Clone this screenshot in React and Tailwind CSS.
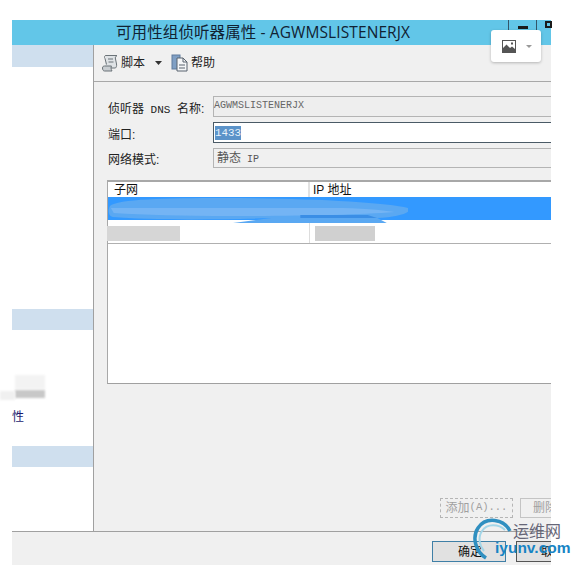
const cjk = "font-['Liberation_Sans','Noto_Sans_CJK_SC',sans-serif]";
const mono = "font-['Liberation_Mono','Noto_Sans_CJK_SC',monospace]";

function ScriptIcon() {
  return (
    <svg width="18" height="19" viewBox="0 0 18 19" fill="none">
      <path d="M5 1.500h11c-1.500 1-2 2-1.500 3.500l1 5c.4 2-.2 3-1 4H4" fill="#dfe3e6" stroke="#6b7378" strokeWidth="1" />
      <path d="M1.500 14c0-1.500 1-2 2-2h7c-.7 1-.7 3 .5 5H3.500c-1.200 0-2-1.200-2-3z" fill="#c9ced2" stroke="#6b7378" strokeWidth="1" />
      <path d="M5 1.500c-1.500 0-2 1.500-1 3l1.500 6M7 5h5M7.500 8h5" stroke="#6b7378" strokeWidth="1" />
    </svg>
  );
}

function HelpIcon() {
  return (
    <svg width="17" height="18" viewBox="0 0 17 18" fill="none">
      <rect x="1" y="1" width="8" height="14" fill="#7f9fc4" stroke="#5f7a9c" />
      <path d="M6 4h6l4 4v9H6z" fill="#f4f6f8" stroke="#59636e" />
      <path d="M12 4v4h4M8 11h6M8 14h6" stroke="#59636e" />
    </svg>
  );
}

function Field({ label, children }) {
  return (
    <div className="flex items-center">
      <span className="w-[105px] h-[20px] shrink-0 pt-[4px] text-[12px] leading-[16px] text-[#222]">{label}</span>
      {children}
    </div>
  );
}

export default function App() {
  return (
    <div className={`relative w-[576px] h-[565px] overflow-hidden bg-white pt-5 pl-3 pr-[25px] ${cjk}`}>
      <div className="flex flex-col h-[545px]">
        {/* title bar */}
        <div className="relative h-[25px] shrink-0 bg-[#62c6e8] flex items-center pl-[104px] text-[15.500px] text-[#123] tracking-[0.1px] font-['Open_Sans','Noto_Sans_CJK_SC',sans-serif]">
          可用性组侦听器属性 - AGWMSLISTENERJX
          <div className="absolute right-0 top-0 h-full flex">
            <div className="w-[28px] border-l border-[#33566a] flex justify-center pt-[6px]">
              <div className="w-[10px] h-[3px] bg-[#1a1a1a]" />
            </div>
            <div className="w-[15px] border-l border-[#33566a] pl-2 pt-[1px]">
              <div className="w-[7px] h-[7px] border-2 border-[#1a1a1a]" />
            </div>
          </div>
        </div>

        <div className="flex flex-1 min-h-0">
          {/* left pages list */}
          <div className="w-[81px] shrink-0 flex flex-col bg-white">
            <div className="h-[22px] bg-[#cfdfee]" />
            <div className="h-[242px]" />
            <div className="h-[21px] bg-[#cfdfee]" />
            <div className="h-[95px] flex items-end text-[12px] leading-[16px] text-[#1a1a6e]">性</div>
            <div className="mt-[21px] h-[21px] bg-[#cfdfee]" />
          </div>

          {/* main panel */}
          <div className="flex-1 min-w-0 flex flex-col bg-[#f0f0f0] border-l border-[#a0a0a0]">
            <div className="h-[37px] shrink-0 border-b border-[#a8a8a8] flex items-center pl-[7px] text-[12px] text-[#222]">
              <ScriptIcon />
              <span className="ml-[2px]">脚本</span>
              <svg className="ml-[10px]" width="7" height="4" viewBox="0 0 7 4"><path d="M0 0h7L3.500 4z" fill="#333" /></svg>
              <span className="ml-[9px] flex"><HelpIcon /></span>
              <span className="ml-[3px]">帮助</span>
            </div>

            <div className="flex flex-col pt-[14px] pl-[14px] gap-[5px]">
              <Field label={<>侦听器<span className={`text-[11px] ${mono}`}> DNS </span>名称:</>}>
                <div className={`flex-1 h-[21px] border border-[#b4b4b4] border-r-0 bg-[#eeeeee] text-[10px] leading-[18px] text-[#666] ${mono}`}>
                  AGWMSLISTENERJX
                </div>
              </Field>
              <Field label="端口:">
                <div className="flex-1 h-[21px] border border-[#4a5a66] border-r-0 bg-white pl-[1px] flex items-center text-[10.800px]">
                  <span className={`bg-[#5b93c9] text-[#e8f2fa] leading-[14px] ${mono}`}>1433</span>
                </div>
              </Field>
              <Field label="网络模式:">
                <div className="flex-1 h-[20px] border border-[#b4b4b4] border-r-0 bg-[#f0f0f0] pl-[3px] text-[12px] leading-[18px] text-[#555]">
                  静态<span className={`text-[10px] ${mono}`}> IP</span>
                </div>
              </Field>
            </div>

            {/* subnet table */}
            <div className="ml-[13px] mt-[12px] h-[204px] shrink-0 border border-t-2 border-r-0 border-[#a8a8a8] border-b-[#a0a0a0] bg-white flex flex-col">
              <div className="h-[15px] shrink-0 flex text-[12px] leading-[16px] text-[#111]">
                <div className="w-[202px] pl-[6px] border-r-2 border-[#e2e2e2]">子网</div>
                <div className="pl-[3px]">IP 地址</div>
              </div>
              <div className="h-[23px] shrink-0 bg-[#3399ff]" />
              <div className="h-[24px] shrink-0 flex border-b border-[#b0b0b0]">
                <div className="w-[202px] border-r border-[#ddd]" />
              </div>
            </div>

            <div className="flex-1" />
            <div className="h-[33px] shrink-0 flex justify-end gap-[7px] pb-[13px] text-[12px] text-[#a0a0a0]">
              <div className="w-[73px] border border-dashed border-[#b5b5b5] flex items-center justify-center">
                添加<span className={`text-[10.500px] ${mono}`}>(A)...</span>
              </div>
              <div className="w-[31px] border border-[#c4c4c4] border-r-0 overflow-hidden pl-[12px] leading-[18px] whitespace-nowrap">删除</div>
            </div>
          </div>
        </div>

        {/* footer */}
        <div className="h-[34px] shrink-0 bg-[#f0f0f0] border-t border-[#a0a0a0] flex justify-end gap-[10px] pt-[9px] text-[12px] text-[#111]">
          <div className="w-[74px] h-[21px] border border-[#3f7fa6] bg-[#e1e1e1] pl-[25px] leading-[20px]">确定</div>
          <div className="w-[35px] h-[21px] border border-[#555] border-r-0 bg-[#e1e1e1] pl-[24px] overflow-hidden whitespace-nowrap leading-[20px]">取消</div>
        </div>
      </div>

      {/* image toolbar floating over the title bar */}
      <div className="absolute left-[491px] top-[30px] w-[50px] h-[32px] bg-white rounded-[3px] shadow-[0_1px_3px_rgba(0,0,0,0.25)] flex items-center pl-[11px] gap-[10px]">
        <svg width="14" height="13" viewBox="0 0 14 13">
          <rect x="0.500" y="0.500" width="13" height="12" fill="#fff" stroke="#555" />
          <path d="M1 12V8l3.500-3.500L8 8l2-1.500L13 9v3z" fill="#555" />
          <rect x="9" y="2.500" width="2" height="2" fill="#555" />
        </svg>
        <svg width="6" height="3" viewBox="0 0 6 3"><path d="M0 0h6L3 3z" fill="#999" /></svg>
      </div>

      {/* redaction smears */}
      <svg className="absolute left-[108px] top-[196px]" width="300" height="30" viewBox="0 0 312 30" preserveAspectRatio="none">
        <path d="M2 10C10 3 60 2 120 2c80 0 170 4 192 10 6 4-10 9-32 10l10 5H130l40-5c-60 2-130 2-165-1C0 20 0 14 2 10z" fill="#5aa8f2" />
        <path d="M3 12h230c30 0 50 2 65 4-40 3-100 4-170 4-50 0-90-1-122-3z" fill="#74b4f4" />
        <path d="M200 19h70l10 3h-80z" fill="#3a8ee6" />
      </svg>
      <div className="absolute left-[107px] top-[226px] w-[73px] h-[15px] bg-[#d6d6d6] blur-[0.500px]" />
      <div className="absolute left-[315px] top-[226px] w-[60px] h-[15px] bg-[#d0d0d0] blur-[0.500px]" />
      <div className="absolute left-[15px] top-[375px] w-[30px] h-[14px] bg-[#f3f3f3] blur-[1px]" />
      <div className="absolute left-[15px] top-[390px] w-[30px] h-[8px] bg-[#c8c8c8] blur-[1px]" />
      <div className="absolute left-0 top-[391px] w-[15px] h-[9px] bg-[#f0f0f0] blur-[1px]" />

      {/* site watermark */}
      <svg className="absolute left-[470px] top-[516px]" width="44" height="46" viewBox="0 0 44 46" fill="none">
        <path d="M40 15C34 3 16 0 8 12c-6 9-3 23 8 30" stroke="#2f8fc0" strokeWidth="3.500" />
        <path d="M35 14C29 8 17 7 12 15c-4 6-3 14 2 20" stroke="#a3d6e8" strokeWidth="2" />
      </svg>
      <span className="absolute left-[513px] top-[523px] text-[16px] leading-[18px] text-[#667]">运维网</span>
      <span className="absolute left-[495px] top-[539px] text-[15.500px] leading-[18px] font-bold text-[#1784c4]">iyunv.com</span>
    </div>
  );
}
